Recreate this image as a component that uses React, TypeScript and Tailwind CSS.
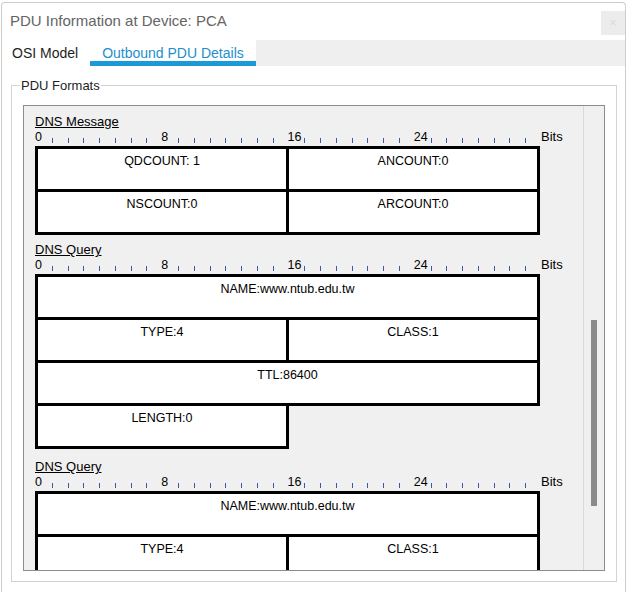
import React from 'react';

type Cell = { label: string; full?: boolean } | null;

interface PduSection {
    title: string;
    gapTop: string;
    rows: Cell[][];
}

const sections: PduSection[] = [
    {
        title: 'DNS Message',
        gapTop: 'mt-0',
        rows: [
            [{ label: 'QDCOUNT: 1' }, { label: 'ANCOUNT:0' }],
            [{ label: 'NSCOUNT:0' }, { label: 'ARCOUNT:0' }],
        ],
    },
    {
        title: 'DNS Query',
        gapTop: 'mt-[7px]',
        rows: [
            [{ label: 'NAME:www.ntub.edu.tw', full: true }],
            [{ label: 'TYPE:4' }, { label: 'CLASS:1' }],
            [{ label: 'TTL:86400', full: true }],
            [{ label: 'LENGTH:0' }, null],
        ],
    },
    {
        // only the part that is scrolled into view
        title: 'DNS Query',
        gapTop: 'mt-[10px]',
        rows: [
            [{ label: 'NAME:www.ntub.edu.tw', full: true }],
            [{ label: 'TYPE:4' }, { label: 'CLASS:1' }],
        ],
    },
];

function Ruler() {
    const bits = Array.from({ length: 32 }, (_, i) => i);
    return (
        <div className="flex h-[17px] items-end">
            <div className="grid w-[505px] grid-cols-32">
                {bits.map((i) =>
                    i % 8 === 0 ? (
                        <div key={i} className="flex h-[12px] items-end overflow-visible pb-[3px]">
                            <span className="whitespace-nowrap text-[12.5px] leading-none text-black">{i}</span>
                        </div>
                    ) : (
                        <div key={i} className="flex h-[12px] items-end pb-[3px]">
                            <span className="ml-[1px] block h-[5px] w-px bg-[#3a5aa8]" />
                        </div>
                    )
                )}
            </div>
            <span className="mb-[3px] ml-[1px] text-[13px] leading-none text-black">Bits</span>
        </div>
    );
}

function FieldBox({ cell, half, shift }: { cell: Cell; half: boolean; shift: boolean }) {
    if (!cell) return null;
    return (
        <div
            className={`h-[46px] border-[3px] border-black bg-white pt-[5px] text-center text-[12.5px] leading-[14px] text-black ${
                half ? 'w-[254px]' : 'w-[505px]'
            } ${shift ? '-ml-[3px]' : ''}`}
        >
            {cell.label}
        </div>
    );
}

function Section({ section }: { section: PduSection }) {
    return (
        <div className={section.gapTop}>
            <div className="text-[13px] leading-[15px] text-black underline underline-offset-[1px]">
                {section.title}
            </div>
            <Ruler />
            <div className="flex flex-col">
                {section.rows.map((row, r) => (
                    <div key={r} className={`flex ${r > 0 ? '-mt-[3px]' : ''}`}>
                        {row.map((cell, c) => (
                            <FieldBox key={c} cell={cell} half={row.length > 1} shift={c > 0} />
                        ))}
                    </div>
                ))}
            </div>
        </div>
    );
}

export default function App() {
    return (
        <div className="h-[592px] w-[627px] overflow-hidden bg-white font-['Liberation_Sans',Arial,sans-serif]">
            <div className="ml-[1px] mt-[2px] h-[590px] w-[625px] rounded-t-[4px] border border-b-0 border-[#cdcdcd] bg-white">
                {/* title bar */}
                <div className="flex h-[37px] items-start justify-between">
                    <div className="ml-[8px] mt-[9px] text-[15px] leading-[17px] text-[#646464]">
                        PDU Information at Device: PCA
                    </div>
                    <div className="mt-[8px] flex h-[24px] w-[24px] items-center justify-center bg-[#ececec] text-[12px] leading-none text-[#dadada]">
                        ×
                    </div>
                </div>

                {/* tabs */}
                <div className="flex h-[26px]">
                    <div className="h-[26px] bg-white pl-[10px] pr-[12px] pt-[5px] text-[14px] leading-[16px] text-[#1e1e1e]">
                        OSI Model
                    </div>
                    <div className="h-[26px] border-b-[5px] border-[#1a9ad6] bg-white px-[12px] pt-[5px] text-[14px] leading-[16px] text-[#1d8fcb]">
                        Outbound PDU Details
                    </div>
                    <div className="flex-1 bg-[#efefef]" />
                </div>

                {/* group box */}
                <fieldset className="ml-[9px] mt-[12px] h-[504px] w-[606px] border border-[#d3d3d3]">
                    <legend className="ml-[8px] px-[1px] text-[13px] leading-[15px] text-[#1e1e1e]">PDU Formats</legend>
                    <div className="ml-[11px] mt-[12px] flex h-[466px] w-[582px] overflow-hidden border border-[#8c8c8c] bg-[#f0f0f0]">
                        <div className="w-[559px] overflow-hidden pl-[11px] pt-[8px]">
                            {sections.map((s, i) => (
                                <Section key={i} section={s} />
                            ))}
                        </div>
                        <div className="w-[21px] border-l border-[#dadada] bg-[#f0f0f0]">
                            <div className="ml-[7px] mt-[214px] h-[186px] w-[6px] bg-[#8a8a8a]" />
                        </div>
                    </div>
                </fieldset>
            </div>
        </div>
    );
}
